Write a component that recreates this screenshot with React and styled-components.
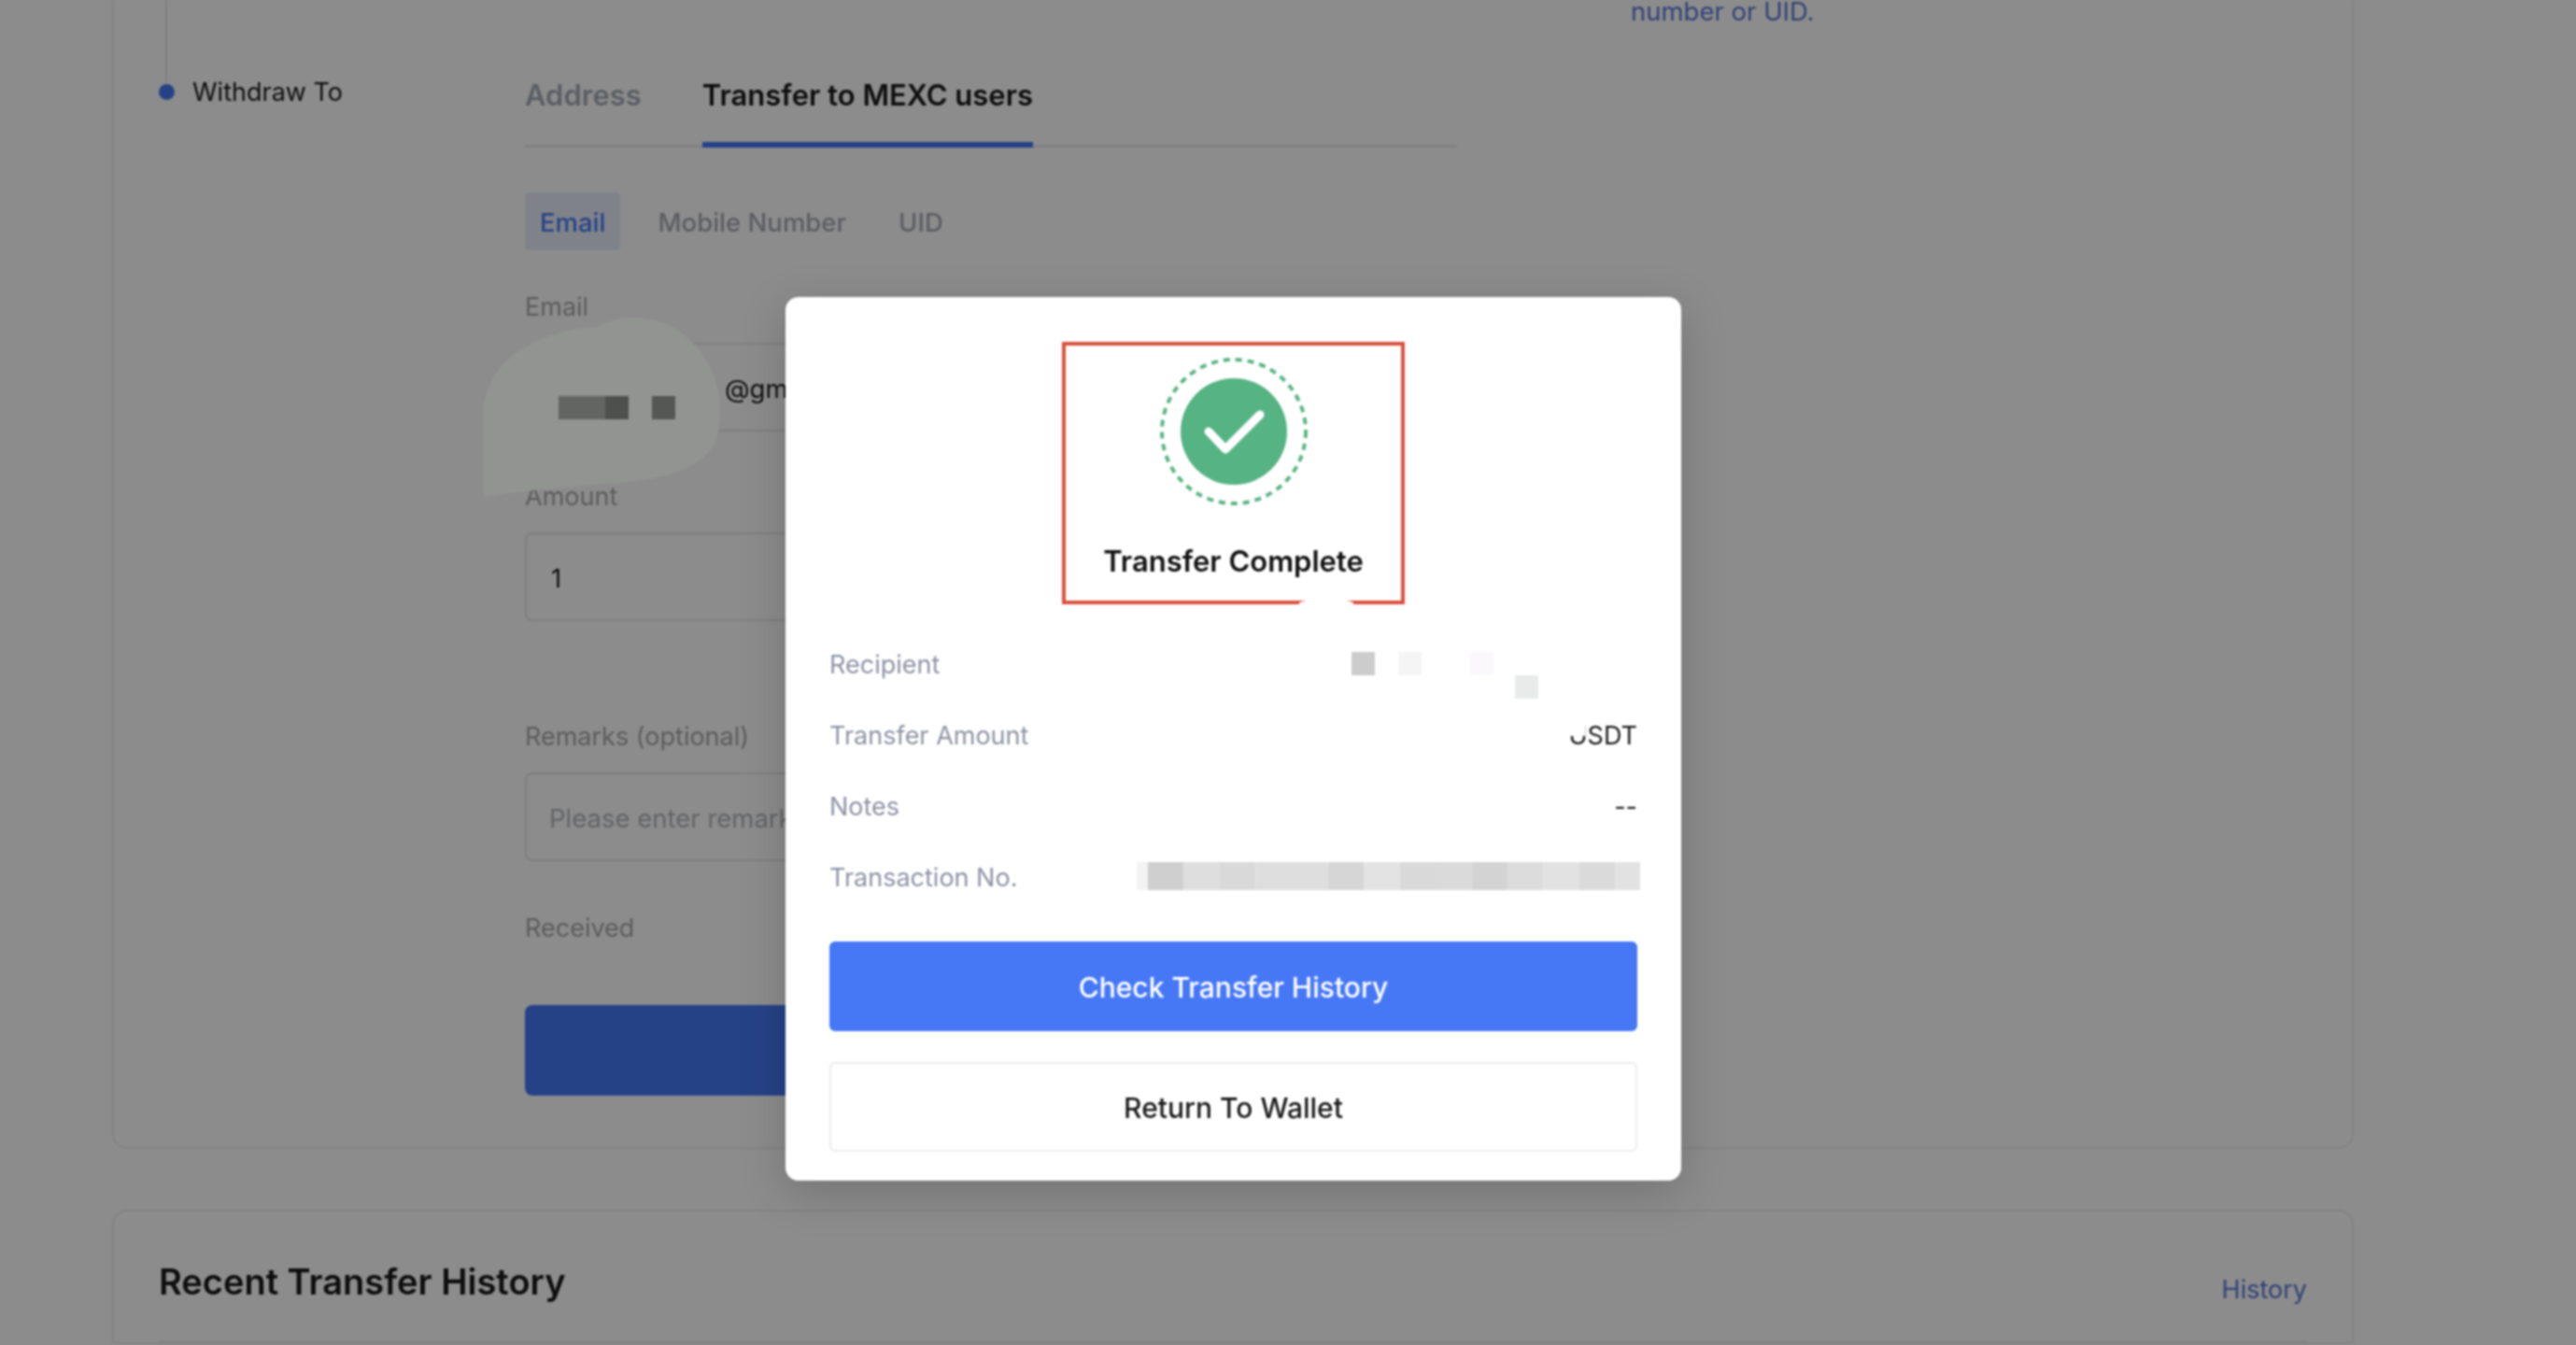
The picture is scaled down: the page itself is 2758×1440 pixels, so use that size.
import React from "react";
import styled, { createGlobalStyle } from "styled-components";

const GlobalStyle = createGlobalStyle`
  html, body {
    margin: 0;
    background: #8c8c8c;
    font-family: Inter, "Liberation Sans", sans-serif;
    color: #1a1a1a;
  }
  * { box-sizing: border-box; }
`;

const Viewport = styled.div`
  width: 2758px;
  height: 1440px;
  overflow: hidden;
`;

// 10px bleed all round so the soft filter does not fade at the window edge
const Page = styled.div`
  position: relative;
  width: 2778px;
  height: 1460px;
  margin: -10px;
  overflow: hidden;
  padding: 10px 0 0 130px;
  background: #fff;
  filter: blur(0.8px);
`;

const Card = styled.section`
  width: 2400px;
  border: 2px solid #eeeeee;
  border-top: ${(p) => (p.$open ? "none" : "2px solid #eeeeee")};
  border-radius: ${(p) => (p.$open ? "0 0 16px 16px" : "16px 16px 0 0")};
  margin-top: ${(p) => (p.$open ? "0" : "65px")};
`;

const TransferBody = styled.div`
  display: flex;
  height: 1228px;
`;

const Steps = styled.div`
  display: flex;
  flex-direction: column;
  width: 440px;
  padding-left: 48px;
`;

const StepLine = styled.div`
  width: 2px;
  height: 89px;
  margin-left: 7px;
  background: #e8e8e8;
`;

const StepRow = styled.div`
  display: flex;
  align-items: center;
  gap: 19px;
  height: 18px;
  font-size: 27px;
  white-space: nowrap;
`;

const StepDot = styled.span`
  width: 17px;
  height: 17px;
  border-radius: 50%;
  background: #4678f6;
`;

const Form = styled.div`
  width: 998px;
`;

const Tabs = styled.div`
  display: flex;
  gap: 65px;
  height: 158px;
  padding-top: 82px;
  border-bottom: 3px solid #ebebeb;
`;

const Tab = styled.div`
  height: 76px;
  font-size: 31px;
  font-weight: 600;
  line-height: 40px;
  white-space: nowrap;
  color: ${(p) => (p.$active ? "#1a1a1a" : "#a7adb9")};
  border-bottom: 6px solid ${(p) => (p.$active ? "#4678f6" : "transparent")};
`;

const SubTabs = styled.div`
  display: flex;
  gap: 24px;
  margin-top: 48px;
`;

const SubTab = styled.div`
  height: 62px;
  padding: 0 16px;
  border-radius: 4px;
  font-size: 27.5px;
  font-weight: 500;
  line-height: 64px;
  white-space: nowrap;
  color: ${(p) => (p.$active ? "#4678f6" : "#a9acb4")};
  background: ${(p) => (p.$active ? "#e7effa" : "transparent")};
`;

const Label = styled.div`
  margin-top: ${(p) => p.$gap}px;
  font-size: 27px;
  line-height: 38px;
  margin-bottom: -2px;
  color: #a9a9a9;
`;

const Input = styled.div`
  height: 95px;
  margin-top: 21px;
  padding-left: ${(p) => p.$inset}px;
  border: 2px solid #e5e6e8;
  border-radius: 8px;
  font-size: 27.5px;
  line-height: 94px;
  white-space: nowrap;
  color: ${(p) => (p.$muted ? "#b5b7bc" : "#1a1a1a")};
`;

const SubmitButton = styled.div`
  height: 97px;
  margin-top: 65px;
  border-radius: 8px;
  background: #4678f6;
`;

const Aside = styled.div`
  margin-left: 186px;
  font-size: 27.5px;
  line-height: 24px;
  white-space: nowrap;
  color: #5a78d8;
`;

const HistoryHeader = styled.div`
  display: flex;
  justify-content: space-between;
  align-items: flex-end;
  margin: 0 48px;
  padding: 50px 0 38px;
  border-bottom: 2px solid #eeeeee;
`;

const HistoryTitle = styled.h2`
  margin: 0;
  font-size: 38px;
  font-weight: 600;
  line-height: 50px;
`;

const HistoryLink = styled.a`
  font-size: 27px;
  line-height: 36px;
  margin-bottom: -2px;
  color: #5a78d8;
`;

const Overlay = styled.div`
  position: absolute;
  inset: 0;
  display: flex;
  align-items: flex-start;
  padding: 328px 0 0 851px;
  background: rgba(0, 0, 0, 0.45);
`;

const Smudge = styled.svg`
  position: absolute;
  left: 10px;
  top: 10px;
`;

const Modal = styled.div`
  width: 959px;
  height: 946px;
  padding: 48px 47px 32px;
  border-radius: 14px;
  background: #fff;
  box-shadow: 0 12px 50px rgba(0, 0, 0, 0.18);
`;

const Highlight = styled.div`
  position: relative;
  display: flex;
  flex-direction: column;
  align-items: center;
  width: 367px;
  height: 281px;
  margin: 0 auto;
  padding-top: 12px;
  border: 4px solid #d8503c;

  &::after {
    content: "";
    position: absolute;
    left: 250px;
    bottom: -6px;
    width: 58px;
    height: 7px;
    border-radius: 50% 50% 0 0;
    background: #fff;
  }
`;

const StatusIcon = styled.svg`
  display: block;
`;

const StatusTitle = styled.div`
  margin-top: 38px;
  font-size: 31px;
  font-weight: 600;
  line-height: 42px;
  white-space: nowrap;
  color: #111;
`;

const Rows = styled.div`
  margin-top: 25px;
`;

const Row = styled.div`
  position: relative;
  display: flex;
  justify-content: space-between;
  align-items: center;
  height: 76px;
  padding-top: 2px;
  font-size: 27px;
`;

const RowLabel = styled.span`
  color: #8e93a3;
`;

const RowValue = styled.span`
  color: #1a1a1a;
`;

const WipedTop = styled.span`
  position: absolute;
  right: 56px;
  top: 14px;
  width: 24px;
  height: 26px;
  background: #fff;
`;

const Mosaic = styled.svg`
  display: block;
  align-self: ${(p) => p.$align};
  margin: ${(p) => p.$margin};
`;

const ModalButton = styled.div`
  height: 96px;
  margin-top: ${(p) => p.$gap}px;
  border-radius: 6px;
  border: 2px solid ${(p) => (p.$primary ? "#4678f6" : "#ececec")};
  background: ${(p) => (p.$primary ? "#4678f6" : "#fff")};
  color: ${(p) => (p.$primary ? "#fff" : "#1a1a1a")};
  font-size: 30px;
  font-weight: 500;
  line-height: 94px;
  text-align: center;
`;

const txCells = [
  "#cfcfcf", "#dedede", "#d9d9d9", "#dedede", "#dedede", "#d6d6d6", "#e3e3e3",
  "#d9d9d9", "#dadada", "#d3d3d3", "#dcdcdc", "#e2e2e2", "#dadada", "#e2e2e2",
];

export default function App() {
  return (
    <>
      <GlobalStyle />
      <Viewport>
        <Page>
          <Card $open>
            <TransferBody>
              <Steps>
                <StepLine />
                <StepRow>
                  <StepDot />
                  Withdraw To
                </StepRow>
              </Steps>
              <Form>
                <Tabs>
                  <Tab>Address</Tab>
                  <Tab $active>Transfer to MEXC users</Tab>
                </Tabs>
                <SubTabs>
                  <SubTab $active>Email</SubTab>
                  <SubTab>Mobile Number</SubTab>
                  <SubTab>UID</SubTab>
                </SubTabs>
                <Label $gap={42}>Email</Label>
                <Input $inset={212}>@gmail.com</Input>
                <Label $gap={51}>Amount</Label>
                <Input $inset={26}>1</Input>
                <Label $gap={105}>Remarks (optional)</Label>
                <Input $inset={24} $muted>Please enter remarks</Input>
                <Label $gap={53}>Received</Label>
                <SubmitButton />
              </Form>
              <Aside>number or UID.</Aside>
            </TransferBody>
          </Card>
          <Card>
            <HistoryHeader>
              <HistoryTitle>Recent Transfer History</HistoryTitle>
              <HistoryLink>History</HistoryLink>
            </HistoryHeader>
          </Card>
          <Overlay>
            <Smudge width="800" height="560" viewBox="0 0 800 560">
              <path
                d="M518 532 L518 440 C520 395 560 355 640 350 C665 335 710 335 740 365 C770 395 778 440 765 475 C750 500 720 510 680 515 C620 520 560 525 518 532 Z"
                fill="#929492"
              />
              <rect x="598" y="424" width="50" height="25" fill="#636563" />
              <rect x="648" y="424" width="25" height="25" fill="#4e504e" />
              <rect x="698" y="424" width="25" height="25" fill="#555755" />
            </Smudge>
            <Modal>
              <Highlight>
                <StatusIcon width="160" height="160" viewBox="0 0 160 160">
                  <circle cx="80" cy="80" r="77" fill="none" stroke="#5bb585" strokeWidth="4" strokeDasharray="7 6" />
                  <circle cx="80" cy="80" r="57" fill="#56b384" />
                  <path d="M53 80 L71 99 L108 62" fill="none" stroke="#fff" strokeWidth="9" strokeLinecap="round" strokeLinejoin="round" />
                </StatusIcon>
                <StatusTitle>Transfer Complete</StatusTitle>
              </Highlight>
              <Rows>
                <Row>
                  <RowLabel>Recipient</RowLabel>
                  <Mosaic width="200" height="50" viewBox="0 0 200 50" $align="flex-end" $margin="0 106px 0 0">
                    <rect x="0" y="0" width="25" height="25" fill="#cccccc" />
                    <rect x="50" y="0" width="25" height="25" fill="#f5f5f5" />
                    <rect x="127" y="0" width="25" height="25" fill="#fbf8fb" />
                    <rect x="175" y="25" width="25" height="25" fill="#e8ebea" />
                  </Mosaic>
                </Row>
                <Row>
                  <RowLabel>Transfer Amount</RowLabel>
                  <RowValue>USDT</RowValue>
                  <WipedTop />
                </Row>
                <Row>
                  <RowLabel>Notes</RowLabel>
                  <RowValue>--</RowValue>
                </Row>
                <Row>
                  <RowLabel>Transaction No.</RowLabel>
                  <Mosaic width="539" height="30" viewBox="0 0 539 30" $align="flex-start" $margin="21px -3px 0 0">
                    <rect x="0" y="0" width="12" height="30" fill="#f3f3f3" />
                    {txCells.map((fill, i) => (
                      <rect key={i} x={12 + i * 38.5} y="0" width="38.5" height="30" fill={fill} />
                    ))}
                  </Mosaic>
                </Row>
              </Rows>
              <ModalButton $primary $gap={32}>Check Transfer History</ModalButton>
              <ModalButton $gap={33}>Return To Wallet</ModalButton>
            </Modal>
          </Overlay>
        </Page>
      </Viewport>
    </>
  );
}
